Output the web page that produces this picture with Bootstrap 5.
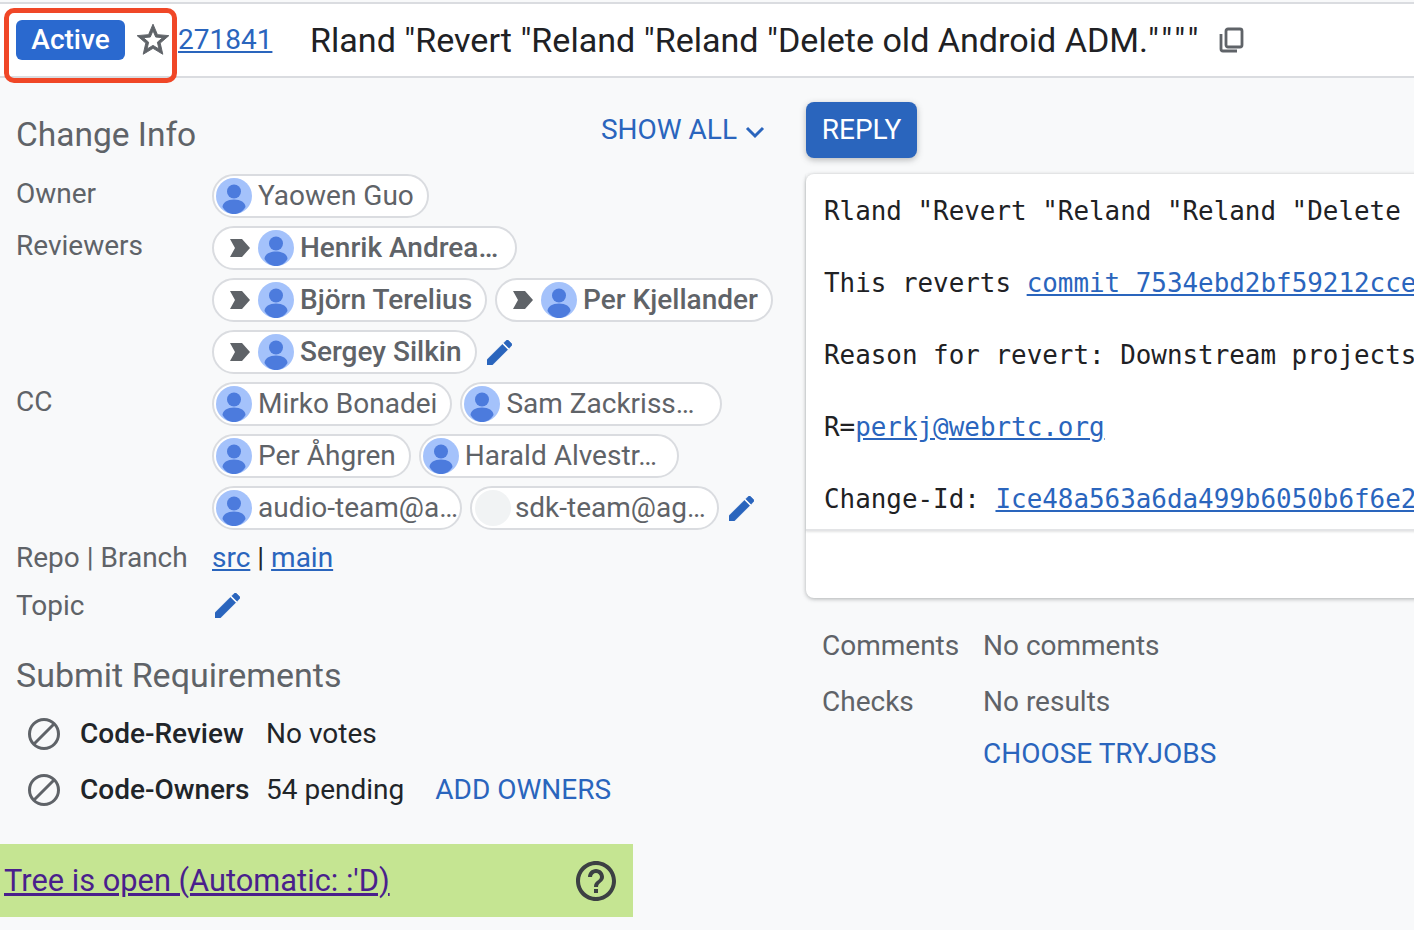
<!DOCTYPE html>
<html lang="en">
<head>
    <meta charset="UTF-8">
    <meta name="viewport" content="width=device-width, initial-scale=1.0">
    <title>Gerrit change 271841</title>
    <link href="https://cdn.jsdelivr.net/npm/bootstrap@5.3.2/dist/css/bootstrap.min.css" rel="stylesheet">
    <style>
        html, body { height: 100%; }
        body {
            background: #f8f9fa;
            color: #212529;
            font-family: Roboto, "Liberation Sans", sans-serif;
            font-size: 28px;
            line-height: 36px;
            overflow: hidden;
            padding-top: 2px;
        }
        a { color: #2a65bd; }
        .top-bar {
            position: relative;
            height: 76px;
            background: #fff;
            border-top: 2px solid #dadce0;
            border-bottom: 2px solid #dadce0;
        }
        .status-chip {
            margin-left: 16px;
            width: 109px;
            height: 40px;
            background: #2a69cf;
            color: #fff;
            border-radius: 6px;
            text-align: center;
            line-height: 40px;
            font-weight: 500;
        }
        .star-icon { width: 38px; height: 38px; fill: #5f6368; stroke: #5f6368; stroke-width: .6; margin-left: 9px; flex: none; }
        .change-num { margin-left: 6px; width: 132px; flex: none; }
        .change-title { font-size: 34.1px; color: #202124; white-space: nowrap; }
        .end-quotes { letter-spacing: 4px; }
        .copy-icon { width: 28px; height: 28px; margin-left: 15px; fill: none; stroke: #5f6368; stroke-width: 2.8; flex: none; }
        .mark-box {
            position: absolute;
            left: 4px;
            top: 4px;
            width: 173px;
            height: 75px;
            border: 5px solid #f04727;
            border-radius: 10px;
            pointer-events: none;
        }
        .left-col { width: 806px; flex: none; }
        .right-col { flex: 1 1 auto; min-width: 0; padding-top: 24px; }
        .head-row { padding: 37px 40px 0 16px; height: 96px; }
        .sect-title { font-size: 33.5px; line-height: 40px; color: #5f6368; font-weight: 400; margin: 0; }
        .req-title { font-size: 34px; margin: 31px 0 11px 16px; }
        .show-all { color: #2a65bd; font-size: 28px; margin-top: -3px; }
        .show-all svg { width: 22px; height: 22px; fill: none; stroke: #2a65bd; stroke-width: 3; margin-left: 7px; }
        .info-row { display: flex; padding-left: 16px; }
        .info-label { width: 196px; flex: none; color: #5f6368; padding-top: 2px; }
        .repo-links { padding-top: 2px; }
        .chip-stack { display: flex; flex-direction: column; gap: 8px; }
        .chip-line { display: flex; gap: 8px; align-items: center; }
        .person-chip {
            display: inline-flex;
            align-items: center;
            height: 44px;
            background: #fff;
            border: 2px solid #dadce0;
            border-radius: 22px;
            color: #5f6368;
            white-space: nowrap;
            padding: 0 13px 0 2px;
        }
        .person-chip.attn { font-weight: 500; padding-left: 0; }
        .pad-s { padding-right: 2px; }
        .pad-sm { padding-right: 11px; }
        .pad-l { padding-right: 17px; }
        .pad-lg { padding-right: 20px; }
        .pad-xl { padding-right: 25px; }
        .attn-icon { width: 20px; height: 20px; fill: #5f6368; margin: 0 8px 0 16px; flex: none; }
        .ava { width: 36px; height: 36px; flex: none; margin-right: 6px; }
        .ava-empty { width: 36px; height: 36px; border-radius: 50%; background: #f1f3f4; flex: none; margin-right: 4px; margin-left: 1px; }
        .edit-icon { width: 25px; height: 25px; fill: #2a65bd; stroke: #2a65bd; stroke-width: .5; flex: none; margin-left: 2px; }
        .topic-row { margin-top: 10px; }
        .topic-row .edit-icon { margin: 7px 0 0 3px; }
        .req-row { display: flex; align-items: center; height: 56px; padding-left: 27px; }
        .req-icon { width: 34px; height: 34px; fill: none; stroke: #5f6368; stroke-width: 3; flex: none; margin-right: 19px; }
        .req-name { width: 186px; flex: none; font-weight: 500; }
        .add-owners { color: #2a65bd; margin-left: 31px; }
        .tree-bar {
            width: 633px;
            height: 73px;
            background: #c5e592;
            padding: 0 13px 0 4px;
            margin-top: 26px;
            font-size: 30.8px;
        }
        .tree-bar a { color: #4a1f8c; }
        .help-icon { width: 48px; height: 48px; fill: #3c4043; }
        .reply-btn {
            width: 111px;
            height: 56px;
            background: #2a65bd;
            color: #fff;
            border: 0;
            border-radius: 8px;
            font-size: 28px;
            box-shadow: 0 2px 6px rgba(60, 64, 67, .35);
            padding: 0;
        }
        .msg-box {
            width: 900px;
            height: 424px;
            margin-top: 16px;
            background: #fff;
            border-radius: 8px 0 0 8px;
            box-shadow: 0 1px 4px rgba(60, 64, 67, .4);
        }
        .msg-text {
            height: 357px;
            margin: 0;
            padding: 19px 18px 0;
            font-family: "DejaVu Sans Mono", monospace;
            font-size: 25.9px;
            line-height: 36px;
            color: #202124;
            overflow: hidden;
            border-bottom: 2px solid #e3e4e6;
            box-shadow: 0 1px 2px rgba(60, 64, 67, .15);
        }
        .side-list { margin-top: 22px; }
        .side-row { display: flex; height: 52px; align-items: center; padding-left: 16px; color: #5f6368; }
        .side-row:first-child { margin-bottom: 4px; }
        .side-label { width: 161px; flex: none; }
        .tryjobs { color: #2a65bd; }
    </style>
</head>
<body>
    <svg width="0" height="0" class="d-block">
        <symbol id="i-ava" viewBox="0 0 36 36">
            <circle cx="18" cy="18" r="18" fill="#a4c2fb"/>
            <circle cx="18" cy="13.5" r="7" fill="#4c7bdd"/>
            <path d="M6.5 29c0-4.500 5-7.500 11.500-7.500s11.500 3 11.500 7.500c-2.500 4.500-7 7-11.500 7s-9-2.500-11.500-7z" fill="#4c7bdd"/>
        </symbol>
        <symbol id="i-attn" viewBox="0 0 20 20"><path d="M0 1h12l8 9-8 9H0l5-9z"/></symbol>
        <symbol id="i-edit" viewBox="3 3 18 18"><path d="M3 17.250V21h3.750L17.810 9.940l-3.750-3.750L3 17.250zM20.710 7.040c.39-.39.39-1.020 0-1.410l-2.340-2.340c-.39-.39-1.020-.39-1.410 0l-1.830 1.830 3.750 3.750 1.830-1.830z"/></symbol>
        <symbol id="i-block" viewBox="0 0 34 34"><circle cx="17" cy="17" r="14.500"/><path d="M7 27 27 7"/></symbol>
    </svg>

    <!-- Barra superior -->
    <div class="top-bar d-flex align-items-center">
        <div class="status-chip">Active</div>
        <svg class="star-icon" viewBox="0 0 24 24"><path d="M22 9.240l-7.190-.62L12 2 9.190 8.630 2 9.240l5.460 4.730L5.820 21 12 17.270 18.180 21l-1.630-7.030L22 9.240zM12 15.400l-3.760 2.270 1-4.280-3.320-2.880 4.380-.38L12 6.100l1.710 4.040 4.380.38-3.320 2.880 1 4.280L12 15.400z"/></svg>
        <div class="change-num"><a href="#">271841</a></div>
        <div class="change-title">Rland "Revert "Reland "Reland "Delete old Android ADM.<span class="end-quotes">""""</span></div>
        <svg class="copy-icon" viewBox="0 0 28 28"><rect x="9" y="3" width="16" height="18" rx="2"/><path d="M4 8v15a2 2 0 0 0 2 2h14"/></svg>
        <div class="mark-box"></div>
    </div>

    <div class="d-flex">
        <!-- Columna izquierda -->
        <div class="left-col">
            <div class="head-row d-flex justify-content-between align-items-start">
                <h2 class="sect-title">Change Info</h2>
                <div class="show-all">SHOW ALL<svg viewBox="0 0 22 22"><path d="M3 7l8 8 8-8"/></svg></div>
            </div>

            <div class="info-row mb-2">
                <div class="info-label">Owner</div>
                <div class="chip-stack">
                    <div class="chip-line">
                        <span class="person-chip"><svg class="ava"><use href="#i-ava"/></svg>Yaowen Guo</span>
                    </div>
                </div>
            </div>
            <div class="info-row mb-2">
                <div class="info-label">Reviewers</div>
                <div class="chip-stack">
                    <div class="chip-line">
                        <span class="person-chip attn pad-l"><svg class="attn-icon"><use href="#i-attn"/></svg><svg class="ava"><use href="#i-ava"/></svg>Henrik Andrea…</span>
                    </div>
                    <div class="chip-line">
                        <span class="person-chip attn"><svg class="attn-icon"><use href="#i-attn"/></svg><svg class="ava"><use href="#i-ava"/></svg>Björn Terelius</span>
                        <span class="person-chip attn"><svg class="attn-icon"><use href="#i-attn"/></svg><svg class="ava"><use href="#i-ava"/></svg>Per Kjellander</span>
                    </div>
                    <div class="chip-line">
                        <span class="person-chip attn"><svg class="attn-icon"><use href="#i-attn"/></svg><svg class="ava"><use href="#i-ava"/></svg>Sergey Silkin</span>
                        <svg class="edit-icon"><use href="#i-edit"/></svg>
                    </div>
                </div>
            </div>
            <div class="info-row mb-2">
                <div class="info-label">CC</div>
                <div class="chip-stack">
                    <div class="chip-line">
                        <span class="person-chip"><svg class="ava"><use href="#i-ava"/></svg>Mirko Bonadei</span>
                        <span class="person-chip pad-xl"><svg class="ava"><use href="#i-ava"/></svg>Sam Zackriss…</span>
                    </div>
                    <div class="chip-line">
                        <span class="person-chip"><svg class="ava"><use href="#i-ava"/></svg>Per Åhgren</span>
                        <span class="person-chip pad-lg"><svg class="ava"><use href="#i-ava"/></svg>Harald Alvestr…</span>
                    </div>
                    <div class="chip-line">
                        <span class="person-chip pad-s"><svg class="ava"><use href="#i-ava"/></svg>audio-team@a…</span>
                        <span class="person-chip pad-sm"><span class="ava-empty"></span>sdk-team@ag…</span>
                        <svg class="edit-icon"><use href="#i-edit"/></svg>
                    </div>
                </div>
            </div>
            <div class="info-row">
                <div class="info-label">Repo | Branch</div>
                <div class="repo-links"><a href="#">src</a> | <a href="#">main</a></div>
            </div>
            <div class="info-row topic-row">
                <div class="info-label">Topic</div>
                <svg class="edit-icon"><use href="#i-edit"/></svg>
            </div>

            <h2 class="sect-title req-title">Submit Requirements</h2>
            <div class="req-row">
                <svg class="req-icon"><use href="#i-block"/></svg>
                <div class="req-name">Code-Review</div>
                <div>No votes</div>
            </div>
            <div class="req-row">
                <svg class="req-icon"><use href="#i-block"/></svg>
                <div class="req-name">Code-Owners</div>
                <div>54 pending</div>
                <div class="add-owners">ADD OWNERS</div>
            </div>

            <div class="tree-bar d-flex align-items-center justify-content-between">
                <a href="#">Tree is open (Automatic: :'D)</a>
                <svg class="help-icon" viewBox="0 0 24 24"><path d="M11 18h2v-2h-2v2zm1-16C6.480 2 2 6.480 2 12s4.480 10 10 10 10-4.480 10-10S17.520 2 12 2zm0 18c-4.410 0-8-3.590-8-8s3.590-8 8-8 8 3.590 8 8-3.590 8-8 8zm0-14c-2.210 0-4 1.790-4 4h2c0-1.100.9-2 2-2s2 .9 2 2c0 2-3 1.750-3 5h2c0-2.250 3-2.500 3-5 0-2.210-1.790-4-4-4z"/></svg>
            </div>
        </div>

        <!-- Columna derecha -->
        <div class="right-col">
            <button class="reply-btn d-block">REPLY</button>
            <div class="msg-box">
                <pre class="msg-text">Rland "Revert "Reland "Reland "Delete old Android ADM.""""

This reverts <a href="#">commit 7534ebd2bf59212cce1a2f5</a>

Reason for revert: Downstream projects

R=<a href="#">perkj@webrtc.org</a>

Change-Id: <a href="#">Ice48a563a6da499b6050b6f6e2</a></pre>
            </div>
            <div class="side-list">
                <div class="side-row"><div class="side-label">Comments</div><div>No comments</div></div>
                <div class="side-row"><div class="side-label">Checks</div><div>No results</div></div>
                <div class="side-row"><div class="side-label"></div><div class="tryjobs">CHOOSE TRYJOBS</div></div>
            </div>
        </div>
    </div>

    <script src="https://cdn.jsdelivr.net/npm/bootstrap@5.3.2/dist/js/bootstrap.bundle.min.js"></script>
</body>
</html>
